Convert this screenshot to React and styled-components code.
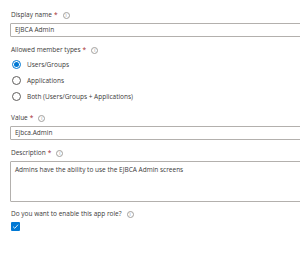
import React from "react";
import styled, { createGlobalStyle } from "styled-components";

const Global = createGlobalStyle`
  html, body { margin: 0; padding: 0; background: #fff; }
  body { font-family: "Open Sans", "Noto Sans", sans-serif; color: #323130; }
`;

const Viewport = styled.div`
  width: 300px;
  height: 274px;
  overflow: hidden;
`;

const Page = styled.div`
  width: 340px;
  padding: 9px 0 0 10px;
  display: flex;
  flex-direction: column;
`;

const Field = styled.div`
  display: flex;
  flex-direction: column;
  margin-bottom: ${(p) => p.$mb || 8}px;
`;

const Label = styled.div`
  display: flex;
  align-items: center;
  font-size: 6.5px;
  line-height: 12px;
  height: 12px;
  padding-left: 1px;
  margin-bottom: ${(p) => p.$mb ?? 2}px;
  color: #3b3a39;
`;

const Req = styled.span`
  color: #a4262c;
  margin-left: 2px;
`;

const Info = styled.span`
  display: inline-flex;
  align-items: center;
  justify-content: center;
  width: 7px;
  height: 7px;
  margin-left: 5px;
  border: 0.7px solid #a19f9d;
  border-radius: 50%;
  font-size: 4.5px;
  line-height: 1;
  color: #8a8886;
  box-sizing: border-box;
`;

const Input = styled.div`
  box-sizing: border-box;
  height: 14px;
  border: 1px solid #b3b0ad;
  border-radius: 1px;
  padding: 0 4px;
  font-size: 6.5px;
  line-height: 12px;
  color: #3b3a39;
`;

const TextArea = styled(Input)`
  height: 41px;
  padding-top: 2px;
`;

const Radios = styled.div`
  display: flex;
  flex-direction: column;
  gap: 5px;
  padding-left: 2px;
  margin-top: 3px;
`;

const RadioRow = styled.div`
  display: flex;
  align-items: center;
  gap: 6px;
  height: 11px;
  font-size: 6.5px;
  color: #3b3a39;
`;

const Circle = styled.span`
  box-sizing: border-box;
  width: 9px;
  height: 9px;
  border-radius: 50%;
  border: 1px solid ${(p) => (p.$on ? "#0078d4" : "#605e5c")};
  display: flex;
  align-items: center;
  justify-content: center;
  &::after {
    content: "";
    display: ${(p) => (p.$on ? "block" : "none")};
    width: 5px;
    height: 5px;
    border-radius: 50%;
    background: #0078d4;
  }
`;

const Check = styled.span`
  width: 9px;
  height: 9px;
  background: #0078d4;
  border-radius: 1px;
  display: flex;
  align-items: center;
  justify-content: center;
  margin-left: 1px;
`;

function InfoIcon() {
  return <Info>i</Info>;
}

function Radio({ on, children }) {
  return (
    <RadioRow>
      <Circle $on={on} />
      <span>{children}</span>
    </RadioRow>
  );
}

export default function App() {
  return (
    <Viewport>
      <Global />
      <Page>
        <Field $mb={7}>
          <Label>
            Display name <Req>*</Req>
            <InfoIcon />
          </Label>
          <Input>EJBCA Admin</Input>
        </Field>
        <Field $mb={10}>
          <Label $mb={0}>
            Allowed member types <Req>*</Req>
            <InfoIcon />
          </Label>
          <Radios>
            <Radio on>Users/Groups</Radio>
            <Radio>Applications</Radio>
            <Radio>Both (Users/Groups + Applications)</Radio>
          </Radios>
        </Field>
        <Field $mb={7}>
          <Label>
            Value <Req>*</Req>
            <InfoIcon />
          </Label>
          <Input>Ejbca.Admin</Input>
        </Field>
        <Field $mb={6}>
          <Label>
            Description <Req>*</Req>
            <InfoIcon />
          </Label>
          <TextArea>Admins have the ability to use the EJBCA Admin screens</TextArea>
        </Field>
        <Field>
          <Label $mb={2}>
            Do you want to enable this app role?
            <InfoIcon />
          </Label>
          <Check>
            <svg width="7" height="7" viewBox="0 0 10 10">
              <path d="M1.5 5.2 L4 7.6 L8.6 2.4" fill="none" stroke="#fff" strokeWidth="1.2" />
            </svg>
          </Check>
        </Field>
      </Page>
    </Viewport>
  );
}
